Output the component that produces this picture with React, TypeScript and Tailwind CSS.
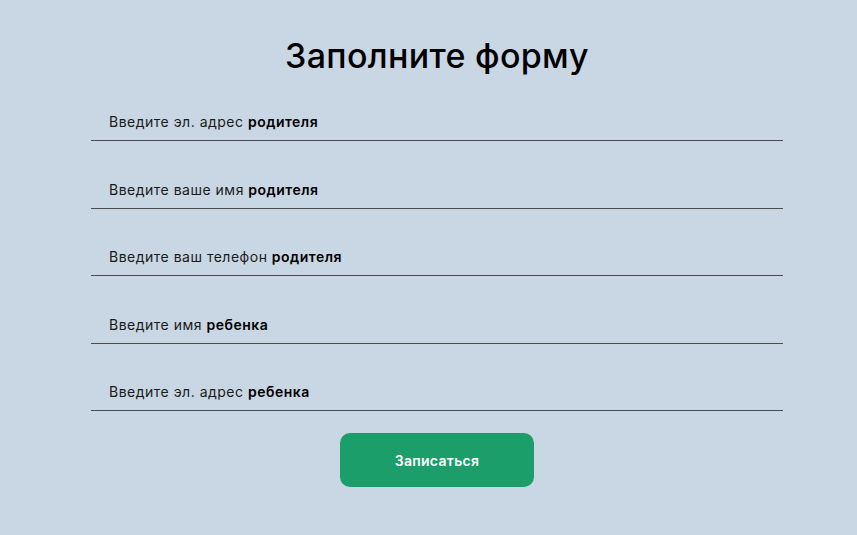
const fields: { text: string; bold: string }[] = [
  { text: "Введите эл. адрес", bold: "родителя" },
  { text: "Введите ваше имя", bold: "родителя" },
  { text: "Введите ваш телефон", bold: "родителя" },
  { text: "Введите имя", bold: "ребенка" },
  { text: "Введите эл. адрес", bold: "ребенка" },
];

export default function App() {
  return (
    <div
      className="min-h-screen bg-[#c9d6e3] pl-[17px] pt-[34px]"
      style={{ fontFamily: "Inter, 'Noto Sans', sans-serif" }}
    >
      <div className="mx-auto flex w-[692px] flex-col items-center">
        <h1 className="text-[34px] leading-[44px] font-medium tracking-[0.3px] text-black">
          Заполните форму
        </h1>
        <form className="mt-[23px] flex w-full flex-col gap-[27.5px]">
          {fields.map((f, i) => (
            <div
              key={i}
              className="flex h-[40px] items-center border-b border-[#4b4b4b] pl-[18px] pt-[2px] text-[14px] tracking-[0.5px] text-[#1a1a1a]"
            >
              {f.text}&nbsp;<b className="font-semibold text-black">{f.bold}</b>
            </div>
          ))}
        </form>
        <button
          type="button"
          className="mt-[22px] h-[54px] w-[194px] rounded-[10px] bg-[#1c9e6a] text-[14px] font-semibold tracking-[0.3px] text-white"
        >
          Записаться
        </button>
      </div>
    </div>
  );
}
